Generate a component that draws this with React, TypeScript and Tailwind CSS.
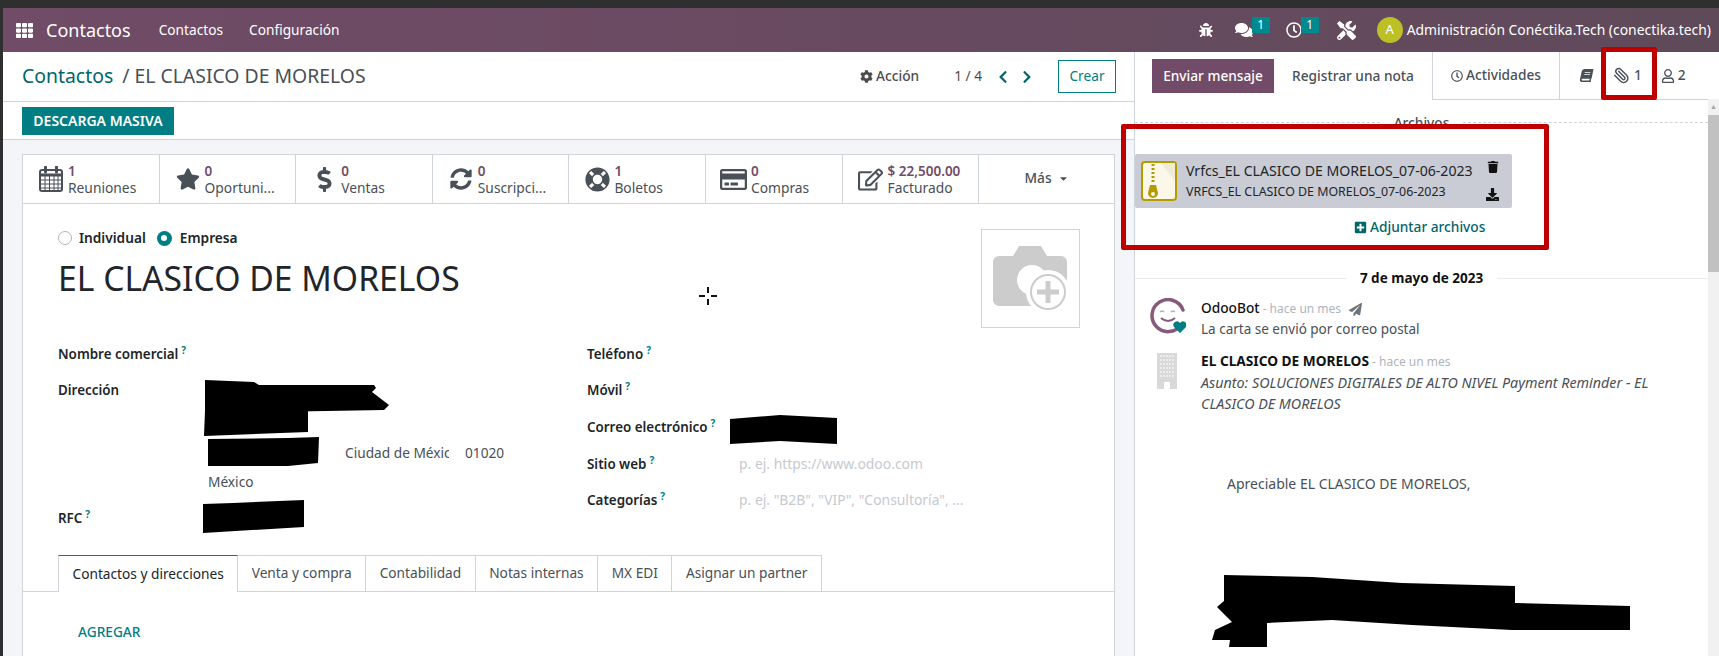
import React from 'react';
import {
  FaBook, FaBug, FaChevronLeft, FaChevronRight, FaCog, FaComments, FaDollarSign, FaDownload,
  FaPaperPlane, FaPlusSquare, FaRegClock, FaRegCreditCard, FaRegEdit, FaRegUser, FaStar,
  FaSyncAlt, FaTh, FaTools, FaTrash, FaLifeRing, FaCaretDown,
} from 'react-icons/fa';
import { Paperclip } from 'lucide-react';

const CalendarIcon = () => (
  <svg width="24" height="26" viewBox="0 0 24 26" fill="none" stroke="currentColor">
    <rect x="1" y="4" width="22" height="21" rx="2" strokeWidth="2" />
    <path d="M1 9h22" strokeWidth="3" />
    <path d="M1 14h22M1 18h22M1 22h22M6 10v14M10.500 10v14M15 10v14M19 10v14" strokeWidth="1" />
    <path d="M6.500 1v5M17.500 1v5" strokeWidth="3" strokeLinecap="round" />
  </svg>
);

const stats = [
  { icon: <CalendarIcon />, value: '1', label: 'Reuniones' },
  { icon: <FaStar size={24} />, value: '0', label: 'Oportuni...' },
  { icon: <FaDollarSign size={25} />, value: '0', label: 'Ventas' },
  { icon: <FaSyncAlt size={22} />, value: '0', label: 'Suscripci...' },
  { icon: <FaLifeRing size={25} />, value: '1', label: 'Boletos' },
  { icon: <FaRegCreditCard size={27} />, value: '0', label: 'Compras' },
  { icon: <FaRegEdit size={25} />, value: '$ 22,500.00', label: 'Facturado' },
];

const tabs = ['Contactos y direcciones', 'Venta y compra', 'Contabilidad', 'Notas internas', 'MX EDI', 'Asignar un partner'];

const Help = () => <sup className="ml-[3px] text-[10px] font-bold text-[#017e84]">?</sup>;

const Label = ({ text, help = true }: { text: string; help?: boolean }) => (
  <span className="text-[13.4px] font-semibold text-[#212529]">
    {text}
    {help && <Help />}
  </span>
);

const Black = ({ className, points, w, h }: { className: string; points: string; w: number; h: number }) => (
  <svg className={`absolute ${className}`} width={w} height={h} viewBox={`0 0 ${w} ${h}`}>
    <polygon points={points} fill="#000" />
  </svg>
);

const ZipIcon = () => (
  <svg width="36" height="40" viewBox="0 0 36 40">
    <rect x="1" y="1" width="34" height="38" rx="3" fill="#fbf7e9" stroke="#b59b00" strokeWidth="2" />
    <path d="M20 2 L34 2 L34 20 Z" fill="#f0ebd8" />
    <path d="M12 3v20" stroke="#b59b00" strokeWidth="3" strokeDasharray="2 2" />
    <path d="M9 24h6l2 8a5 5 0 1 1-10 0z" fill="#b59b00" />
    <circle cx="12" cy="33" r="2" fill="#fbf7e9" />
  </svg>
);

const CameraIcon = () => (
  <svg width="76" height="70" viewBox="0 0 76 70">
    <path d="M6 12h14l6-10h22l6 10h14a6 6 0 0 1 6 6v38a6 6 0 0 1-6 6H6a6 6 0 0 1-6-6V18a6 6 0 0 1 6-6z" fill="#cccccc" />
    <circle cx="39" cy="36" r="15" fill="#fff" />
    <circle cx="55" cy="48" r="20" fill="#cccccc" stroke="#fff" strokeWidth="4" />
    <circle cx="55" cy="48" r="16" fill="#fff" />
    <path d="M55 37v22M44 48h22" stroke="#cccccc" strokeWidth="5" />
  </svg>
);

const BotAvatar = () => (
  <svg width="36" height="36" viewBox="0 0 36 36">
    <path d="M31 27A16 16 0 1 1 33 12" fill="none" stroke="#875a7b" strokeWidth="3.5" strokeLinecap="round" />
    <path d="M10 14q2-2 4 0M21 14q2-2 4 0" fill="none" stroke="#c9a9c0" strokeWidth="1.5" />
    <path d="M11 20q7 6 14 0" fill="none" stroke="#875a7b" strokeWidth="2" />
    <path d="M30 35l-6-6a3.500 3.500 0 0 1 6-4 3.500 3.500 0 0 1 6 4z" fill="#017e84" />
  </svg>
);

const BuildingIcon = () => (
  <svg width="20" height="36" viewBox="0 0 20 36">
    <path d="M0 0h20v36h-7v-7H7v7H0z" fill="#d9d9d9" />
    <path d="M3 3h14M3 7h14M3 11h14M3 15h14M3 19h14M3 23h14" stroke="#f2f2f2" strokeWidth="1.5" strokeDasharray="2 1" />
  </svg>
);

export default function App() {
  return (
    <div className="relative h-[656px] w-[1719px] overflow-hidden bg-[#2f2f2f] pt-[8px] pl-[3px] font-['Noto_Sans',sans-serif] text-[13.7px] text-[#4c4c4c]">
      {/* Navbar */}
      <div className="flex h-[44px] items-center bg-gradient-to-r from-[#714b67] to-[#5f4a5a] text-white">
        <FaTh size={17} className="ml-[13px]" />
        <span className="ml-[13px] text-[18px]">Contactos</span>
        <span className="ml-[28px] text-[13.7px]">Contactos</span>
        <span className="ml-[26px] text-[13.7px]">Configuración</span>
        <div className="ml-auto flex items-center pr-[8px]">
          <FaBug size={14} />
          <span className="relative ml-[22px]">
            <FaComments size={18} />
            <span className="absolute -top-[4px] left-[17px] flex h-[16px] w-[18px] items-center justify-center bg-[#00898f] text-[12px]">1</span>
          </span>
          <span className="relative ml-[33px]">
            <FaRegClock size={16} />
            <span className="absolute -top-[5px] left-[15px] flex h-[16px] w-[18px] items-center justify-center bg-[#00898f] text-[12px]">1</span>
          </span>
          <FaTools size={19} className="ml-[35px]" />
          <span className="ml-[21px] flex h-[26px] w-[26px] items-center justify-center rounded-full bg-[#bcc026] text-[13px]">A</span>
          <span className="ml-[4px] whitespace-nowrap text-[13.9px]">Administración Conéctika.Tech (conectika.tech)</span>
        </div>
      </div>

      <div className="flex h-[604px]">
        {/* Left pane */}
        <div className="flex w-[1131px] flex-col bg-[#f4f5f9]">
          <div className="flex h-[50px] shrink-0 items-center border-b border-[#ced4da] bg-white pr-[18px] pl-[19px]">
            <span className="-mt-[2px] text-[19.400px] text-[#01666b]">Contactos</span>
            <span className="-mt-[2px] ml-[9px] text-[19.400px] text-[#495057]">/ EL CLASICO DE MORELOS</span>
            <span className="ml-auto flex items-center gap-[3px] font-medium text-[#4c4c4c]"><FaCog size={13} /> Acción</span>
            <span className="ml-[35px]">1 / 4</span>
            <FaChevronLeft size={14} className="ml-[14px] text-[#01666b]" />
            <FaChevronRight size={14} className="ml-[10px] text-[#01666b]" />
            <span className="ml-[24px] flex h-[33px] w-[58px] items-center justify-center border border-[#017e84] text-[#017e84]">Crear</span>
          </div>
          <div className="flex h-[38px] shrink-0 items-center border-b border-[#ced4da] bg-white pl-[19px]">
            <span className="flex h-[28px] w-[152px] items-center justify-center bg-[#017e84] text-[14px] font-semibold text-white">DESCARGA MASIVA</span>
          </div>

          <div className="mt-[14px] ml-[19px] flex w-[1093px] flex-1 flex-col border-x border-t border-[#ced4da] bg-white">
            {/* Stat buttons */}
            <div className="flex h-[49px] shrink-0 border-b border-[#ced4da]">
              {stats.map(s => (
                <div key={s.label} className="flex w-[136.6px] items-center gap-[3px] border-r border-[#ced4da] pl-[14px] text-[#495057]">
                  <span className="flex w-[28px] justify-center">{s.icon}</span>
                  <div className="flex flex-col">
                    <span className="text-[13.5px] leading-[17px] font-semibold text-[#714b67]">{s.value}</span>
                    <span className="text-[13.8px] leading-[16px]">{s.label}</span>
                  </div>
                </div>
              ))}
              <div className="-mt-[2px] flex flex-1 items-center justify-center gap-[6px] font-medium text-[#495057]">Más <FaCaretDown size={11} /></div>
            </div>

            {/* Form */}
            <div className="relative flex flex-1 flex-col">
              <div className="flex items-start justify-between pr-[34px] pl-[35px]">
                <div>
                  <div className="mt-[24px] flex items-center text-[13.7px] font-semibold text-[#212529]">
                    <span className="h-[14px] w-[14px] rounded-full border border-[#adb5bd]" />
                    <span className="ml-[7px]">Individual</span>
                    <span className="ml-[11px] flex h-[15px] w-[15px] items-center justify-center rounded-full bg-[#017e84]"><span className="h-[6px] w-[6px] rounded-full bg-white" /></span>
                    <span className="ml-[8px]">Empresa</span>
                  </div>
                  <div className="mt-[7px] text-[33.7px] leading-[44px] text-[#212529]">EL CLASICO DE MORELOS</div>
                </div>
                <div className="mt-[25px] flex h-[99px] w-[99px] items-center justify-center border border-[#ced4da]"><CameraIcon /></div>
              </div>

              <div className="mt-[8px] grid grid-cols-[529px_1fr] pl-[35px]">
                <div className="flex flex-col">
                  <div className="flex h-[36px] items-center"><Label text="Nombre comercial" /></div>
                  <div className="flex h-[36px] items-center"><Label text="Dirección" help={false} /></div>
                  <div className="h-[26px]" />
                  <div className="flex h-[38px] items-center text-[#495057]">
                    <span className="ml-[287px] w-[104px] overflow-hidden whitespace-nowrap">Ciudad de México</span>
                    <span className="ml-[16px]">01020</span>
                  </div>
                  <div className="flex h-[20px] items-center pl-[150px] text-[#495057]">México</div>
                  <div className="flex h-[52px] items-center"><Label text="RFC" /></div>
                </div>
                <div className="flex flex-col">
                  <div className="flex h-[36px] items-center"><Label text="Teléfono" /></div>
                  <div className="flex h-[36px] items-center"><Label text="Móvil" /></div>
                  <div className="flex h-[38px] items-center"><Label text="Correo electrónico" /></div>
                  <div className="flex h-[36px] items-center"><Label text="Sitio web" /><span className="absolute left-[716px] text-[13.9px] text-[#c6cad0]">p. ej. https://www.odoo.com</span></div>
                  <div className="flex h-[36px] items-center"><Label text="Categorías" /><span className="absolute left-[716px] text-[13.9px] text-[#c6cad0]">p. ej. "B2B", "VIP", "Consultoría", ...</span></div>
                </div>
              </div>

              {/* Tabs */}
              <div className="mt-auto flex h-[37px] shrink-0 border-b border-[#ced4da] pl-[35px]">
                {tabs.map((t, i) => (
                  <div
                    key={t}
                    className={i === 0
                      ? 'flex h-[37px] items-center border-x border-t border-x-[#ced4da] border-t-[#714b67] bg-white px-[13.5px] text-[#212529]'
                      : 'flex h-[36px] items-center border-t border-r border-[#ced4da] px-[13.5px] text-[#495057]'}
                  >
                    {t}
                  </div>
                ))}
              </div>
              <div className="h-[64px] shrink-0 pt-[30px] pl-[55px] leading-[20px] font-medium text-[#017e84]">AGREGAR</div>

              {/* Redactions */}
              <Black className="left-[181px] top-[176px]" w={186} h={34} points="1,0 50,2 55,5 170,5 172,8 168,12 185,25 180,30 1,33" />
              <Black className="left-[181px] top-[204px]" w={104} h={28} points="1,3 50,2 104,2 104,24 0,28" />
              <Black className="left-[185px] top-[232px]" w={112} h={30} points="0,3 80,2 111,1 110,27 80,30 0,30" />
              <Black className="left-[180px] top-[296px]" w={102} h={33} points="0,4 30,3 101,0 101,27 0,33" />
              <Black className="left-[707px] top-[211px]" w={108} h={30} points="0,4 50,0 107,3 107,29 50,26 0,29" />
            </div>
          </div>
        </div>

        {/* Chatter */}
        <div className="flex flex-1 flex-col border-l border-[#ced4da] bg-white">
          <div className="flex h-[47px] shrink-0 items-start pl-[17px]">
            <span className="mt-[7px] flex h-[34px] w-[122px] items-center justify-center bg-[#714b67] font-medium text-white">Enviar mensaje</span>
            <span className="mt-[7px] flex h-[34px] w-[158px] items-center justify-center font-medium text-[#495057]">Registrar una nota</span>
            <div className="flex h-[48px] flex-1 items-center border-b border-[#ced4da] font-medium text-[#495057]">
              <span className="flex h-full w-[128px] items-center justify-center gap-[3px] border-x border-[#ced4da]"><FaRegClock size={12} /> Actividades</span>
              <FaBook size={13} className="ml-[20px] -skew-x-12" />
              <Paperclip size={17} className="ml-[20px] -scale-x-100" />
              <span className="ml-[4px]">1</span>
              <FaRegUser size={14} className="ml-[19px]" />
              <span className="ml-[3px]">2</span>
            </div>
          </div>

          <div className="flex flex-1 overflow-hidden">
            <div className="flex flex-1 flex-col">
              <div className="flex h-[44px] shrink-0 items-center">
                <div className="flex-1 translate-y-[1px] border-b border-dashed border-[#ced4da]" />
                <span className="translate-y-[2px] px-[14px] font-medium text-[#495057]">Archivos</span>
                <div className="flex-1 translate-y-[1px] border-b border-dashed border-[#ced4da]" />
              </div>
              <div className="mt-[11px] flex h-[54px] w-[377px] shrink-0 items-center rounded-[2px] bg-[#c9ccd4] pl-[6px] text-[#212529]">
                <ZipIcon />
                <div className="ml-[9px] flex flex-col">
                  <span className="whitespace-nowrap text-[14.1px] leading-[21px]">Vrfcs_EL CLASICO DE MORELOS_07-06-2023</span>
                  <span className="whitespace-nowrap text-[12.4px] leading-[21px]">VRFCS_EL CLASICO DE MORELOS_07-06-2023</span>
                </div>
                <div className="ml-auto flex h-full flex-col items-center justify-between py-[7px] pr-[13px] text-[#111]">
                  <FaTrash size={12} />
                  <FaDownload size={13} />
                </div>
              </div>
              <div className="mt-[9px] ml-[219px] flex h-[20px] shrink-0 items-center gap-[3px] font-medium text-[#01666b]"><FaPlusSquare size={13} /> Adjuntar archivos</div>

              <div className="mt-[31px] flex h-[20px] shrink-0 items-center">
                <div className="flex-1 border-b border-[#e9ecef]" />
                <span className="px-[14px] text-[13.5px] font-bold text-[#111]">7 de mayo de 2023</span>
                <div className="flex-1 border-b border-[#e9ecef]" />
              </div>

              <div className="mt-[10px] flex shrink-0 pl-[15px]">
                <div className="flex w-[51px] shrink-0 justify-start"><BotAvatar /></div>
                <div>
                  <div className="leading-[20px]"><span className="font-medium text-[#111]">OdooBot</span><span className="text-[12px] text-[#adb5bd]"> - hace un mes</span><FaPaperPlane size={13} className="ml-[8px] inline text-[#6c757d]" /></div>
                  <div className="text-[13.5px] leading-[21px] text-[#495057]">La carta se envió por correo postal</div>
                </div>
              </div>

              <div className="mt-[11px] flex shrink-0 pl-[22px]">
                <div className="flex w-[44px] shrink-0 justify-start pt-[2px]"><BuildingIcon /></div>
                <div>
                  <div className="leading-[20px]"><span className="font-bold text-[#111]">EL CLASICO DE MORELOS</span><span className="text-[12px] text-[#adb5bd]"> - hace un mes</span></div>
                  <div className="w-[470px] text-[14.3px] leading-[21px] text-[#495057] italic">Asunto: SOLUCIONES DIGITALES DE ALTO NIVEL Payment Reminder - EL CLASICO DE MORELOS</div>
                </div>
              </div>

              <div className="mt-[60px] shrink-0 pl-[92px] text-[14px] leading-[20px] text-[#495057]">Apreciable EL CLASICO DE MORELOS,</div>
            </div>
            {/* Scrollbar */}
            <div className="flex w-[11px] shrink-0 flex-col bg-[#f1f1f1]">
              <div className="flex h-[16px] items-center justify-center text-[7px] text-[#a3a3a3]">▲</div>
              <div className="h-[157px] bg-[#c1c1c1]" />
            </div>
          </div>
        </div>
      </div>

      <Black className="left-[1212px] top-[575px]" w={420} h={72} points="12,0 100,2 190,8 303,11 303,28 418,31 418,55 300,55 200,50 120,45 55,48 55,72 17,72 18,65 0,65 3,55 20,47 5,32 12,26" />

      {/* Red highlight boxes */}
      <div className="absolute top-[47px] left-[1601px] h-[53px] w-[56px] rounded-[2px] border-[5px] border-[#c00000]" />
      <div className="absolute top-[124px] left-[1121px] h-[126px] w-[428px] rounded-[2px] border-[5px] border-[#c00000]" />

      {/* Cross cursor */}
      <svg className="absolute top-[285px] left-[697px]" width="22" height="22" viewBox="0 0 22 22">
        <path d="M11 1v7M11 14v7M1 11h7M14 11h7" stroke="#fff" strokeWidth="4" />
        <path d="M11 2v6M11 14v6M2 11h6M14 11h6" stroke="#111" strokeWidth="2" />
      </svg>
    </div>
  );
}
